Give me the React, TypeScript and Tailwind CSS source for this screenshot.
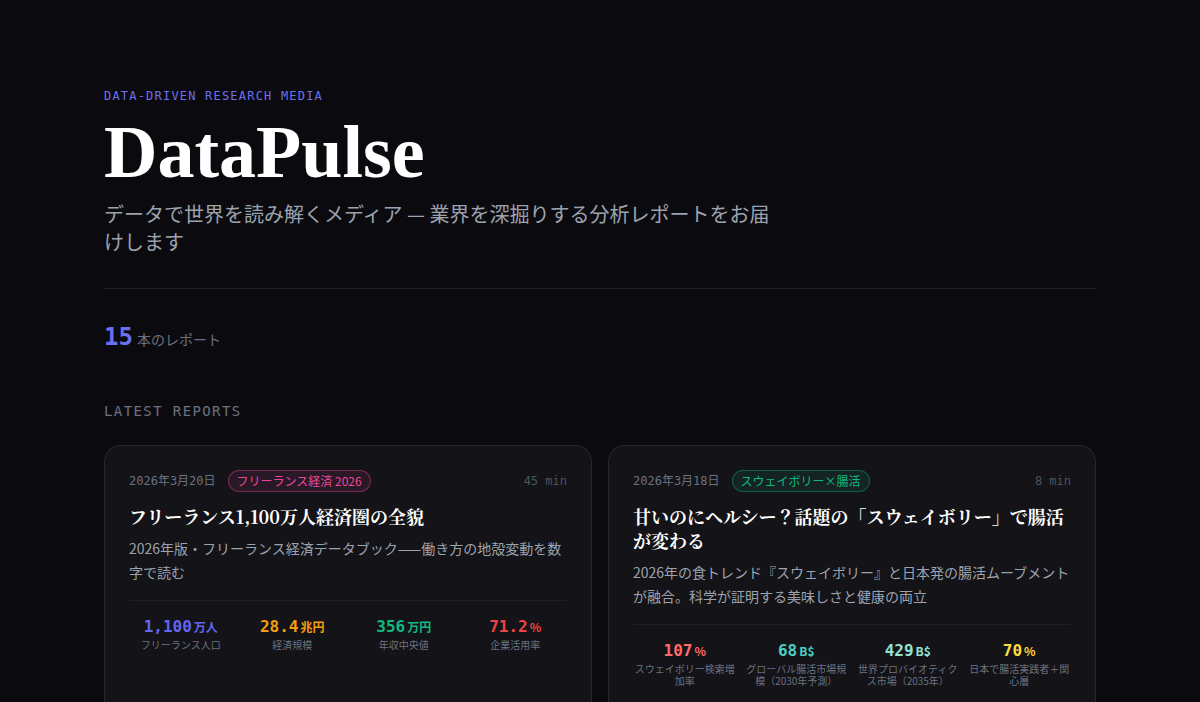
import React from "react";

type Metric = { value: string; unit: string; label: string; color: string };

type Report = {
  date: string;
  tag: string;
  tagClass: string;
  minutes: string;
  title: string;
  summary: string;
  metrics: Metric[];
};

const mono = "font-['DejaVu_Sans_Mono','Liberation_Mono','Noto_Sans_CJK_JP',monospace]";
const sans = "font-['Noto_Sans_CJK_JP','Noto_Sans',sans-serif]";
const serifJp = "font-['Noto_Serif_CJK_JP','Liberation_Serif','Noto_Sans_CJK_JP',serif]";

const reports: Report[] = [
  {
    date: "2026年3月20日",
    tag: "フリーランス経済 2026",
    tagClass: "border-[#ec4899]/40 bg-[#ec4899]/10 text-[#ec4899]",
    minutes: "45 min",
    title: "フリーランス1,100万人経済圏の全貌",
    summary: "2026年版・フリーランス経済データブック——働き方の地殻変動を数字で読む",
    metrics: [
      { value: "1,100", unit: "万人", label: "フリーランス人口", color: "text-[#6366f1]" },
      { value: "28.4", unit: "兆円", label: "経済規模", color: "text-[#f59e0b]" },
      { value: "356", unit: "万円", label: "年収中央値", color: "text-[#10b981]" },
      { value: "71.2", unit: "%", label: "企業活用率", color: "text-[#ef4444]" },
    ],
  },
  {
    date: "2026年3月18日",
    tag: "スウェイボリー×腸活",
    tagClass: "border-[#10b981]/40 bg-[#10b981]/10 text-[#10b981]",
    minutes: "8 min",
    title: "甘いのにヘルシー？話題の「スウェイボリー」で腸活が変わる",
    summary: "2026年の食トレンド『スウェイボリー』と日本発の腸活ムーブメントが融合。科学が証明する美味しさと健康の両立",
    metrics: [
      { value: "107", unit: "%", label: "スウェイボリー検索増加率", color: "text-[#ff6b6b]" },
      { value: "68", unit: "B$", label: "グローバル腸活市場規模（2030年予測）", color: "text-[#4ecdc4]" },
      { value: "429", unit: "B$", label: "世界プロバイオティクス市場（2035年）", color: "text-[#95e1d3]" },
      { value: "70", unit: "%", label: "日本で腸活実践者＋関心層", color: "text-[#ffd93d]" },
    ],
  },
];

function ReportCard({ report }: { report: Report }) {
  return (
    <article className="rounded-2xl border border-[#26262d] bg-[#131318] p-6 pb-10">
      <div className="flex items-center justify-between">
        <div className="flex items-center gap-3">
          <span className={`${mono} text-xs text-[#6b7280]`}>{report.date}</span>
          <span className={`${sans} rounded-full border px-2 py-[2px] text-xs leading-4 ${report.tagClass}`}>
            {report.tag}
          </span>
        </div>
        <span className={`${mono} text-xs text-[#4b5563]`}>{report.minutes}</span>
      </div>
      <h3 className={`${serifJp} mt-3 text-lg font-bold leading-6 text-white`}>{report.title}</h3>
      <p className={`${sans} mt-2 text-sm leading-6 text-[#9ca3af]`}>{report.summary}</p>
      <div className="mt-4 grid grid-cols-4 gap-2 border-t border-[#1f1f26] pt-4">
        {report.metrics.map((m) => (
          <div key={m.label} className="text-center">
            <div className={`${mono} text-base font-bold leading-5 ${m.color}`}>
              {m.value}
              <span className={`${sans} ml-0.5 text-xs font-bold`}>{m.unit}</span>
            </div>
            <div className={`${sans} mt-0.5 text-[10px] leading-3 text-[#6b7280]`}>{m.label}</div>
          </div>
        ))}
      </div>
    </article>
  );
}

export default function App() {
  return (
    <div className="min-h-screen bg-[#0b0b0f]">
      <main className="mx-auto max-w-5xl px-4 pt-[88px]">
        <header>
          <p className={`${mono} text-xs tracking-[0.1em] text-[#6b6ff0]`}>DATA-DRIVEN RESEARCH MEDIA</p>
          <h1 className="mt-2 font-['Liberation_Serif',serif] text-[74px] font-bold leading-[1.1] text-white">
            DataPulse
          </h1>
          <p className={`${sans} mt-[7px] max-w-2xl text-xl leading-7 text-[#9ca3af]`}>
            データで世界を読み解くメディア — 業界を深掘りする分析レポートをお届けします
          </p>
        </header>
        <hr className="mt-8 border-[#202027]" />
        <div className="mt-8 flex items-baseline gap-1">
          <span className={`${mono} text-2xl font-bold text-[#6b6ff0]`}>15</span>
          <span className={`${sans} text-sm text-[#6b7280]`}>本のレポート</span>
        </div>
        <h2 className={`${mono} mt-12 text-sm tracking-[0.1em] text-[#6b7280]`}>LATEST REPORTS</h2>
        <div className="mt-6 grid grid-cols-2 gap-4">
          {reports.map((r) => (
            <ReportCard key={r.title} report={r} />
          ))}
        </div>
      </main>
    </div>
  );
}
